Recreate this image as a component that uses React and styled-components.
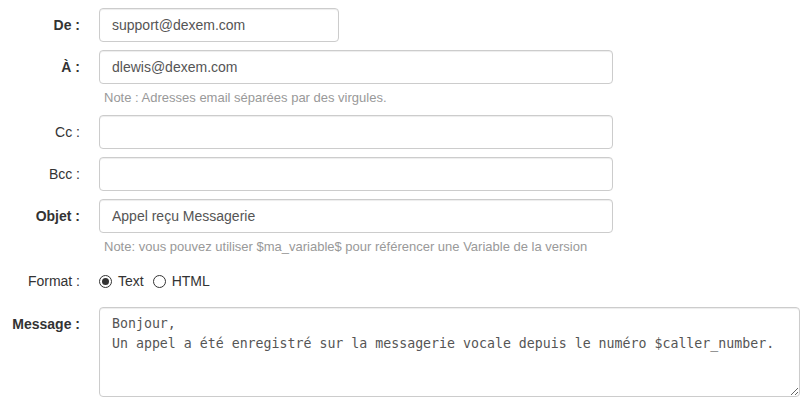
import React from 'react'
import styled, { createGlobalStyle } from 'styled-components'

const GlobalStyle = createGlobalStyle`
  body {
    margin: 0;
    background: #fff;
    font-family: "Liberation Sans", Arial, sans-serif;
    font-size: 14px;
    line-height: 20px;
    color: #333;
  }
`

const Form = styled.form`
  padding-top: 8px;
  width: 805px;
`

const Row = styled.div`
  display: grid;
  grid-template-columns: 80px auto;
  column-gap: 19px;
  align-items: start;
  margin-bottom: ${p => p.$mb || 8}px;
`

const Label = styled.label`
  text-align: right;
  padding-top: 7px;
  font-weight: ${p => (p.$bold ? 'bold' : 'normal')};
  white-space: nowrap;
`

const Field = styled.div`
  display: flex;
  flex-direction: column;
`

const Input = styled.input`
  box-sizing: border-box;
  width: ${p => p.$width}px;
  height: 34px;
  padding: 6px 12px;
  border: 1px solid #ccc;
  border-radius: 4px;
  box-shadow: inset 0 1px 1px rgba(0, 0, 0, 0.075);
  font-family: "Liberation Sans", Arial, sans-serif;
  font-size: 14px;
  color: #555;
  background: #fff;
  outline: none;
`

const Help = styled.span`
  display: block;
  margin-top: 5px;
  font-size: 13px;
  line-height: 17px;
  color: #999;
  padding-left: 5px;
  white-space: nowrap;
`

const Radios = styled.div`
  display: flex;
  align-items: center;
  padding-top: 7px;
  height: 20px;
`

const RadioLabel = styled.label`
  display: flex;
  align-items: center;
  margin-right: 9px;
`

const Dot = styled.span`
  box-sizing: border-box;
  width: 13px;
  height: 13px;
  border: 1px solid #333;
  border-radius: 50%;
  margin-right: 6px;
  display: flex;
  align-items: center;
  justify-content: center;

  &::after {
    content: '';
    display: ${p => (p.$checked ? 'block' : 'none')};
    width: 7px;
    height: 7px;
    border-radius: 50%;
    background: #333;
  }
`

const TextArea = styled.textarea`
  box-sizing: border-box;
  width: 701px;
  height: 90px;
  padding: 6px 12px;
  border: 1px solid #ccc;
  border-radius: 4px;
  box-shadow: inset 0 1px 1px rgba(0, 0, 0, 0.075);
  font-family: "DejaVu Sans Mono", "Liberation Mono", monospace;
  font-size: 13.25px;
  line-height: 20px;
  color: #555;
  resize: vertical;
  outline: none;
`

const message = 'Bonjour,\nUn appel a été enregistré sur la messagerie vocale depuis le numéro $caller_number.'

const App = () => (
  <>
    <GlobalStyle />
    <Form>
      <Row>
        <Label $bold>De :</Label>
        <Input $width={240} defaultValue="support@dexem.com" />
      </Row>
      <Row $mb={9}>
        <Label $bold>À :</Label>
        <Field>
          <Input $width={514} defaultValue="dlewis@dexem.com" />
          <Help>Note : Adresses email séparées par des virgules.</Help>
        </Field>
      </Row>
      <Row>
        <Label>Cc :</Label>
        <Input $width={514} />
      </Row>
      <Row>
        <Label>Bcc :</Label>
        <Input $width={514} />
      </Row>
      <Row $mb={9}>
        <Label $bold>Objet :</Label>
        <Field>
          <Input $width={514} defaultValue="Appel reçu Messagerie" />
          <Help>Note: vous pouvez utiliser $ma_variable$ pour référencer une Variable de la version</Help>
        </Field>
      </Row>
      <Row $mb={16}>
        <Label>Format :</Label>
        <Radios>
          <RadioLabel><Dot $checked />Text</RadioLabel>
          <RadioLabel><Dot />HTML</RadioLabel>
        </Radios>
      </Row>
      <Row>
        <Label $bold>Message :</Label>
        <TextArea defaultValue={message} />
      </Row>
    </Form>
  </>
)

export default App
